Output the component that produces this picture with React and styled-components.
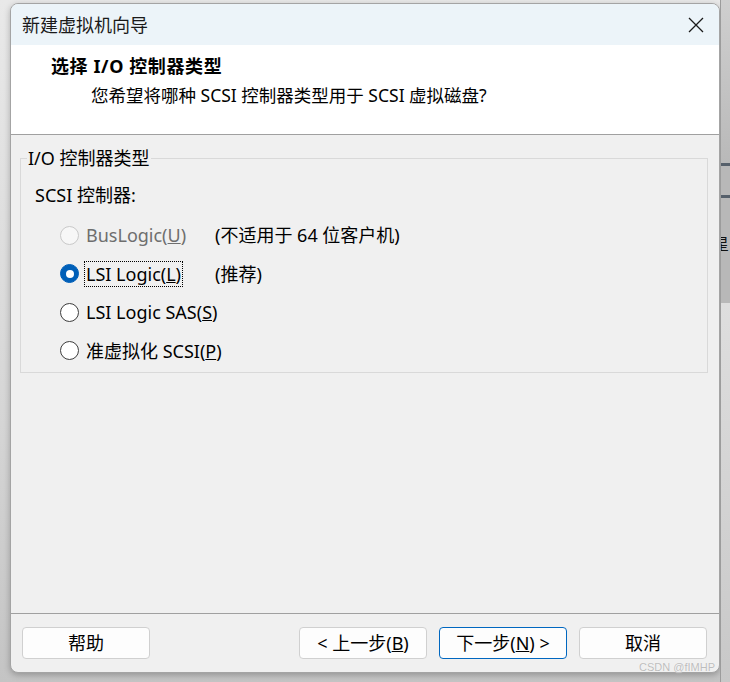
import React from "react";
import styled, { createGlobalStyle } from "styled-components";

const FONT = '"Noto Sans", "Noto Sans CJK SC", sans-serif';

const Global = createGlobalStyle`
  html, body { margin: 0; padding: 0; width: 730px; height: 682px; overflow: hidden; }
  body { background: #e4e4e4; font-family: ${FONT}; }
  * { box-sizing: border-box; }
`;

const Page = styled.div`
  position: relative;
  width: 730px;
  height: 682px;
  display: flex;
  padding: 3px 0 0 10px;
  background: linear-gradient(180deg, #e9e9e9 0%, #d6d6d6 60%, #c4c4c4 100%);
`;

const Dialog = styled.div`
  width: 710px;
  height: 670px;
  display: flex;
  flex-direction: column;
  border: 1px solid #a4a4a4;
  border-radius: 8px;
  overflow: hidden;
  background: #f0f0f0;
  box-shadow: 0 2px 6px rgba(0, 0, 0, 0.25);
`;

const TitleBar = styled.div`
  height: 41px;
  flex: none;
  display: flex;
  align-items: center;
  justify-content: space-between;
  padding: 0 15px 0 11px;
  background: #ecf4f9;
  font-size: 18px;
  line-height: 22px;
  color: #1a1a1a;
`;

const CloseButton = styled.span`
  display: flex;
  width: 16px;
  height: 16px;
  margin-top: 1px;
`;

const Header = styled.div`
  height: 90px;
  flex: none;
  background: #ffffff;
  border-bottom: 1px solid #a0a0a0;
  padding: 10px 0 0 40px;
  color: #000;
`;

const HeaderTitle = styled.div`
  font-size: 18px;
  font-weight: 700;
  line-height: 22px;
  letter-spacing: 0.6px;
`;

const HeaderSub = styled.div`
  font-size: 17.5px;
  line-height: 22px;
  margin: 7px 0 0 40px;
`;

const Body = styled.div`
  flex: 1;
  padding: 13px 11px 0 9px;
`;

const Group = styled.fieldset`
  margin: 0;
  padding: 0 0 2px 14px;
  min-width: 0;
  border: 1px solid #d9d9d9;
  font-size: 18px;
  color: #000;
`;

const Legend = styled.legend`
  margin-left: -8px;
  padding: 0 1px;
  line-height: 20px;
  font-size: 18px;
`;

const GroupLabel = styled.div`
  line-height: 20px;
  margin-top: 17px;
  margin-bottom: 11px;
`;

const Option = styled.div`
  height: 38.5px;
  display: grid;
  grid-template-columns: 19px 122px auto;
  column-gap: 7px;
  align-items: center;
  padding-left: 25px;
  line-height: 20px;
  color: ${(p) => (p.$disabled ? "#6e6e6e" : "#000")};
`;

const Radio = styled.span`
  width: 19px;
  height: 19px;
  border-radius: 50%;
  display: flex;
  align-items: center;
  justify-content: center;
  border: 1px solid ${(p) => (p.$disabled ? "#c9c9c9" : p.$checked ? "#005fb8" : "#3d3d3d")};
  background: ${(p) => (p.$disabled ? "#f7f7f7" : p.$checked ? "#005fb8" : "#ffffff")};
  &::after {
    content: "";
    display: ${(p) => (p.$checked ? "block" : "none")};
    width: 8px;
    height: 8px;
    border-radius: 50%;
    background: #ffffff;
  }
`;

const OptionText = styled.span`
  justify-self: start;
  margin-left: -2px;
  padding: 2px 1px 2px;
  border: 1px ${(p) => (p.$focused ? "dotted #000" : "solid transparent")};
  white-space: nowrap;
`;

const Note = styled.span`
  white-space: nowrap;
  color: #000;
`;

const Footer = styled.div`
  flex: none;
  height: 59px;
  border-top: 1px solid #a0a0a0;
  display: flex;
  align-items: flex-start;
  padding: 13px 12px 0 11px;
  gap: 12px;
`;

const Spacer = styled.div`
  flex: 1;
`;

const Button = styled.button`
  width: 128px;
  height: 32px;
  border-radius: 4px;
  border: 1px solid ${(p) => (p.$primary ? "#0067c0" : "#d0d0d0")};
  background: #fdfdfd;
  font-family: ${FONT};
  font-size: 18px;
  line-height: 20px;
  color: #000;
  padding: 0;
  display: flex;
  align-items: center;
  justify-content: center;
`;

const Strip = styled.div`
  width: 10px;
  height: 682px;
  margin-top: -3px;
  display: flex;
  flex-direction: column;
  border-left: 1px solid #9c9c9c;
  overflow: hidden;
`;

const StripBlock = styled.div`
  flex: none;
  height: ${(p) => p.$h}px;
  background: ${(p) => p.$bg};
  font-size: 16px;
  line-height: ${(p) => p.$h}px;
  white-space: nowrap;
  color: #111;
`;

const StripText = styled.span`
  display: inline-block;
  margin-left: -8px;
`;

const Watermark = styled.div`
  position: absolute;
  right: 15px;
  bottom: 9px;
  font-family: "Liberation Sans", Arial, sans-serif;
  font-size: 11px;
  line-height: 12px;
  color: #bdbdbd;
  text-shadow: 0 0 1px #fff;
`;

const CloseIcon = () => (
  <svg width="16" height="16" viewBox="0 0 16 16">
    <path d="M1 1 L15 15 M15 1 L1 15" stroke="#1a1a1a" strokeWidth="1.3" fill="none" />
  </svg>
);

const options = [
  { label: <>BusLogic(<u>U</u>)</>, note: "(不适用于 64 位客户机)", disabled: true },
  { label: <>LSI Logic(<u>L</u>)</>, note: "(推荐)", checked: true, focused: true },
  { label: <>LSI Logic SAS(<u>S</u>)</> },
  { label: <>准虚拟化 SCSI(<u>P</u>)</> },
];

export default function App() {
  return (
    <>
      <Global />
      <Page>
        <Dialog>
          <TitleBar>
            <span>新建虚拟机向导</span>
            <CloseButton>
              <CloseIcon />
            </CloseButton>
          </TitleBar>
          <Header>
            <HeaderTitle>选择 I/O 控制器类型</HeaderTitle>
            <HeaderSub>您希望将哪种 SCSI 控制器类型用于 SCSI 虚拟磁盘?</HeaderSub>
          </Header>
          <Body>
            <Group>
              <Legend>I/O 控制器类型</Legend>
              <GroupLabel>SCSI 控制器:</GroupLabel>
              {options.map((o, i) => (
                <Option key={i} $disabled={o.disabled}>
                  <Radio $checked={o.checked} $disabled={o.disabled} />
                  <OptionText $focused={o.focused}>{o.label}</OptionText>
                  {o.note ? <Note>{o.note}</Note> : <span />}
                </Option>
              ))}
            </Group>
          </Body>
          <Footer>
            <Button>帮助</Button>
            <Spacer />
            <Button>&lt; 上一步(<u>B</u>)</Button>
            <Button $primary>下一步(<u>N</u>) &gt;</Button>
            <Button>取消</Button>
          </Footer>
        </Dialog>
        <Strip>
          <StripBlock $h={163} $bg="linear-gradient(180deg,#cfcfcf,#b9b9b9)" />
          <StripBlock $h={3} $bg="#56606b" />
          <StripBlock $h={29} $bg="#b8b8b8" />
          <StripBlock $h={3} $bg="#56606b" />
          <StripBlock $h={36} $bg="#b8b8b8" />
          <StripBlock $h={20} $bg="#b8b8b8">
            <StripText>星</StripText>
          </StripBlock>
          <StripBlock $h={49} $bg="#b8b8b8" />
          <StripBlock $h={379} $bg="linear-gradient(180deg,#dedede,#c8c8c8)" />
        </Strip>
        <Watermark>CSDN @fIMHP</Watermark>
      </Page>
    </>
  );
}
